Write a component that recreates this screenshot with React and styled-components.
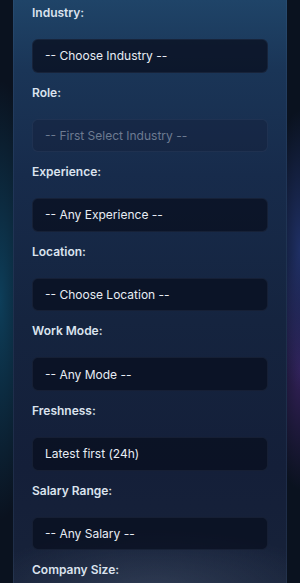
import React from 'react';
import styled, { createGlobalStyle } from 'styled-components';

const fields = [
	{ label: 'Industry:', value: '-- Choose Industry --' },
	{ label: 'Role:', value: '-- First Select Industry --', disabled: true },
	{ label: 'Experience:', value: '-- Any Experience --' },
	{ label: 'Location:', value: '-- Choose Location --' },
	{ label: 'Work Mode:', value: '-- Any Mode --' },
	{ label: 'Freshness:', value: 'Latest first (24h)' },
	{ label: 'Salary Range:', value: '-- Any Salary --' },
	{ label: 'Company Size:' },
];

function App() {
	return (
		<>
			<GlobalStyle />
			<Page>
				<Panel>
					{fields.map((f) => (
						<Field key={f.label}>
							<Label>{f.label}</Label>
							{f.value && <Select className={f.disabled && 'disabled'}>{f.value}</Select>}
						</Field>
					))}
				</Panel>
			</Page>
		</>
	);
}

export default App;


const GlobalStyle = createGlobalStyle`
	html, body {
		margin: 0;
		padding: 0;
		height: 583px;
		overflow: hidden;
		background: #0a121f;
	}
	* {
		box-sizing: border-box;
	}
`;
const Page = styled.div`
	height: 583px;
	overflow: hidden;
	padding: 0 13px;
	font-family: Inter, "Noto Sans", sans-serif;
	background:
		radial-gradient(ellipse 40px 220px at 0 300px, rgba(14, 70, 100, 0.85), transparent),
		radial-gradient(ellipse 30px 140px at 300px 250px, rgba(40, 60, 130, 0.7), transparent),
		radial-gradient(ellipse 30px 120px at 300px 370px, rgba(60, 35, 100, 0.8), transparent),
		#0a121f;
`;
const Panel = styled.div`
	height: 583px;
	padding: 5px 18px 0;
	display: flex;
	flex-direction: column;
	gap: 12px;
	border-left: 1px solid rgba(90, 120, 160, 0.15);
	border-right: 1px solid rgba(90, 120, 160, 0.15);
	background:
		radial-gradient(ellipse 180px 60px at 140px 590px, rgba(90, 105, 130, 0.35), transparent),
		linear-gradient(180deg, #1f4468 0%, #1a3557 12%, #172b4b 30%, #15243f 55%, #141f39 80%, #172239 100%);
`;
const Field = styled.div`
	display: flex;
	flex-direction: column;
`;
const Label = styled.div`
	height: 16px;
	line-height: 16px;
	margin-bottom: 18px;
	font-size: 12px;
	font-weight: 600;
	color: #dbe3ee;
`;
const Select = styled.div`
	height: 33.6px;
	display: flex;
	align-items: center;
	padding: 0 12px;
	border-radius: 6px;
	border: 1px solid rgba(120, 150, 190, 0.1);
	background: rgba(9, 15, 32, 0.78);
	font-size: 12px;
	color: #e8edf4;
	&.disabled {
		background: rgba(20, 32, 58, 0.45);
		color: #6d7b91;
	}
`;
